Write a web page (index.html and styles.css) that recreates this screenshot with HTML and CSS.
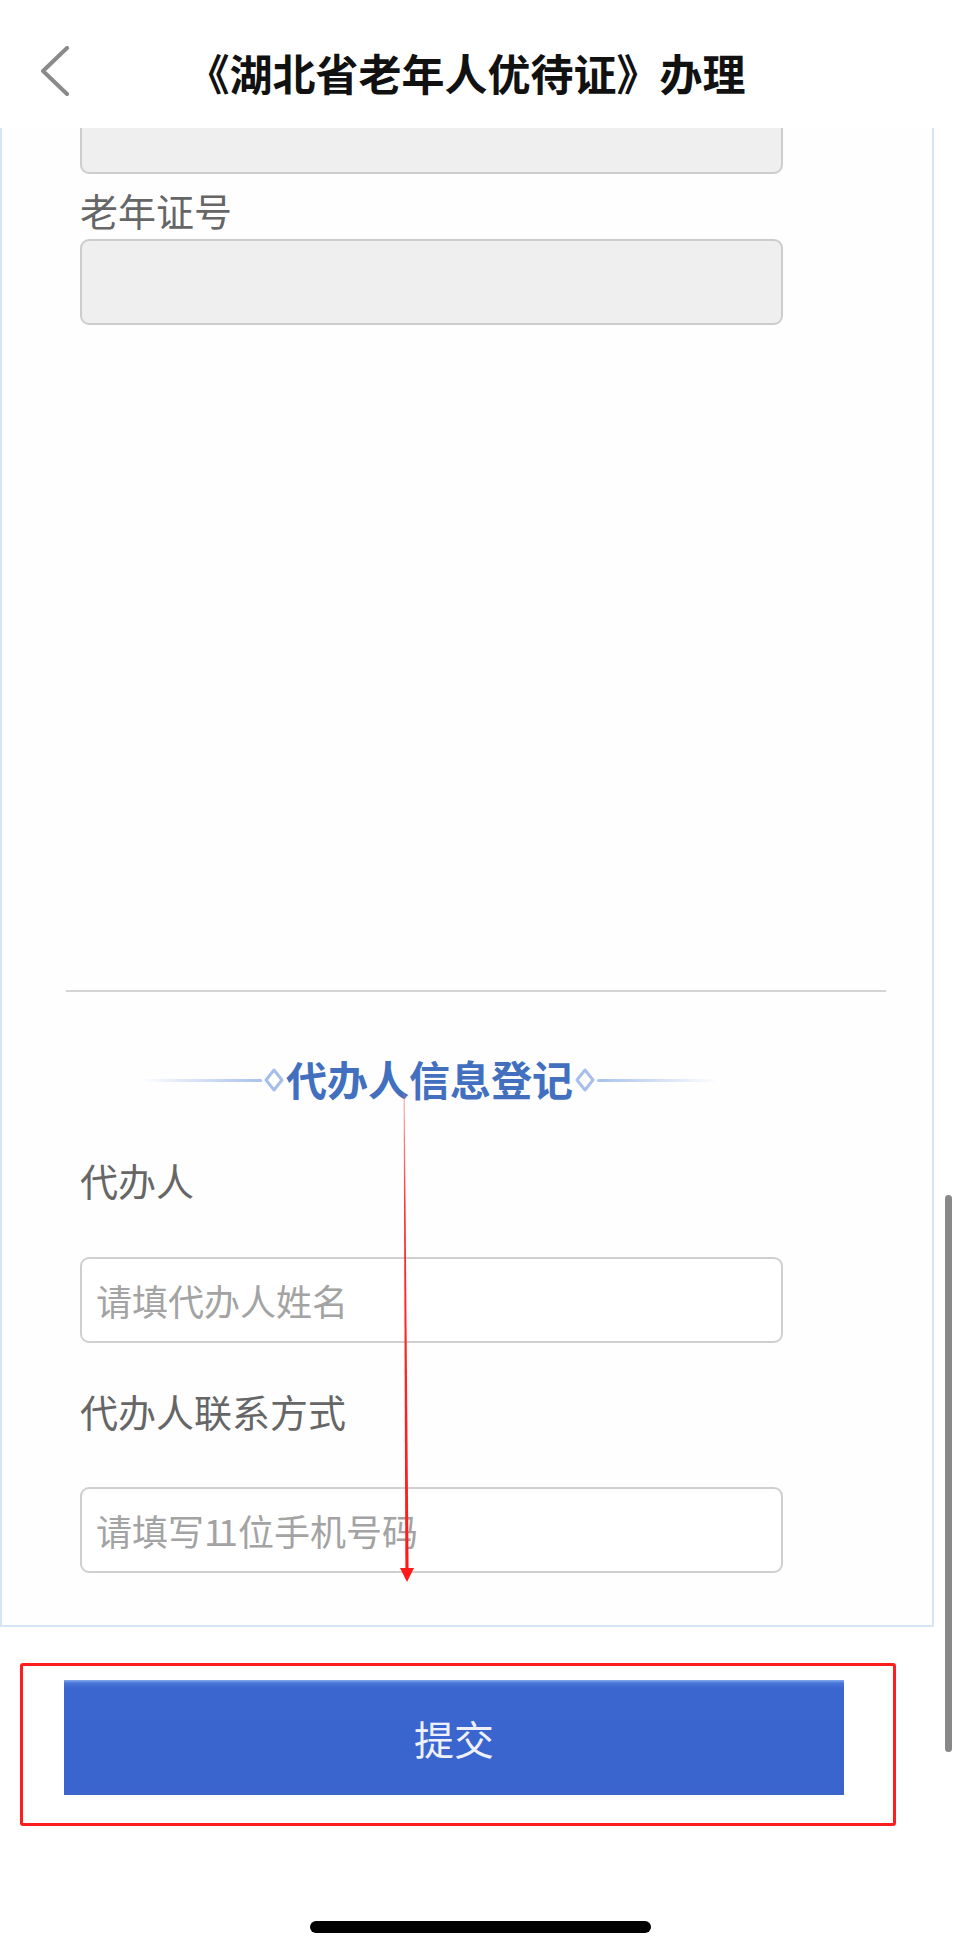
FILE: index.html
```html
<!DOCTYPE html>
<html lang="zh-CN">
<head>
<meta charset="utf-8">
<title>《湖北省老年人优待证》办理</title>
<link rel="stylesheet" href="styles.css">
</head>
<body>
<div class="page">
  <header class="nav">
    <svg class="back" width="30" height="52" viewBox="0 0 30 52" aria-hidden="true">
      <polyline points="27,2 3,25 27,48" fill="none" stroke="#8a8a8a" stroke-width="4" stroke-linecap="round" stroke-linejoin="round"/>
    </svg>
    <h1 class="title">《湖北省老年人优待证》办理</h1>
  </header>

  <main class="card">
    <div class="box grey cut"></div>
    <div class="label first">老年证号</div>
    <div class="box grey"></div>

    <div class="divider"></div>

    <div class="section-title">
      <span class="rule left"></span>
      <svg class="diamond" width="24" height="26" viewBox="0 0 24 26" aria-hidden="true">
        <polygon points="12,3 20,13 12,23 4,13" fill="#ffffff" stroke="#a5bfeb" stroke-width="3" stroke-linejoin="round"/>
      </svg>
      <span class="section-text">代办人信息登记</span>
      <svg class="diamond" width="24" height="26" viewBox="0 0 24 26" aria-hidden="true">
        <polygon points="12,3 20,13 12,23 4,13" fill="#ffffff" stroke="#a5bfeb" stroke-width="3" stroke-linejoin="round"/>
      </svg>
      <span class="rule right"></span>
    </div>

    <div class="label agent">代办人</div>
    <div class="box"><span class="ph">请填代办人姓名</span></div>

    <div class="label contact">代办人联系方式</div>
    <div class="box"><span class="ph">请填写<span class="num">11</span>位手机号码</span></div>
  </main>

  <div class="highlight">
    <button class="submit" type="button">提交</button>
  </div>

  <div class="home-bar"></div>

  <div class="scrollbar"></div>

  <svg class="arrow" width="22" height="500" viewBox="0 0 22 500" aria-hidden="true">
    <defs>
      <linearGradient id="ag" x1="0" y1="0" x2="0" y2="1">
        <stop offset="0" stop-color="#ff6a6a" stop-opacity="0.6"/>
        <stop offset="0.25" stop-color="#ff2a2a"/>
        <stop offset="1" stop-color="#ff1a1a"/>
      </linearGradient>
    </defs>
    <polygon points="7.6,5 8.6,5 12.6,483 9.4,483" fill="url(#ag)"/>
    <polygon points="4,480 18,480 11,494" fill="#ff1a1a"/>
  </svg>
</div>
</body>
</html>
```

FILE: styles.css
```css
* {
  box-sizing: border-box;
}

html, body {
  margin: 0;
  padding: 0;
  background: #ffffff;
}

body {
  font-family: "Noto Sans CJK SC", "Noto Sans", sans-serif;
}

.page {
  position: relative;
  width: 960px;
  height: 1946px;
  overflow: hidden;
  background: #ffffff;
}

/* Header */
.nav {
  height: 128px;
  padding-top: 16px;
  padding-right: 98px;
  display: flex;
  align-items: center;
  background: #ffffff;
}

.back {
  flex: none;
  margin-left: 40px;
  display: block;
}

.title {
  flex: 1;
  margin: 0;
  text-align: center;
  font-size: 43px;
  line-height: 50px;
  font-weight: 700;
  color: #111111;
  letter-spacing: 0;
  white-space: nowrap;
}

/* Card */
.card {
  width: 934px;
  padding: 0 0 52px 78px;
  border-left: 2px solid #d5e5f5;
  border-right: 2px solid #d5e5f5;
  border-bottom: 2px solid #d5e5f5;
  background: #fefeff;
  overflow: hidden;
}

.box {
  width: 703px;
  height: 86px;
  border: 2px solid #cfcfcf;
  border-radius: 9px;
  background: #ffffff;
  display: flex;
  align-items: center;
  padding-left: 14px;
}

.box.grey {
  background: #efefef;
  border-color: #cdcdcd;
}

.box.cut {
  margin-top: -40px;
}

.ph {
  font-size: 36px;
  line-height: 40px;
  color: #a3a3a3;
  white-space: nowrap;
}

.num {
  letter-spacing: -6px;
  margin-right: 6px;
}

.label {
  font-size: 38px;
  line-height: 44px;
  color: #666666;
  white-space: nowrap;
}

.label.first {
  margin-top: 14px;
  margin-bottom: 7px;
}

.label.agent {
  margin-top: 50px;
  margin-bottom: 55px;
}

.label.contact {
  margin-top: 46px;
  margin-bottom: 54px;
}

.divider {
  margin-top: 665px;
  margin-left: -14px;
  width: 820px;
  height: 2px;
  background: #d4d4d4;
}

.section-title {
  margin-top: 56px;
  margin-left: 61px;
  width: 577px;
  height: 60px;
  display: flex;
  align-items: center;
}

.rule {
  flex: 1;
  height: 3px;
  margin-top: 4px;
  border-radius: 2px;
}

.rule.left {
  background: linear-gradient(to right, rgba(168, 193, 236, 0), #a8c1ec);
}

.rule.right {
  background: linear-gradient(to left, rgba(168, 193, 236, 0), #a8c1ec);
}

.diamond {
  flex: none;
  display: block;
  margin-top: 4px;
}

.section-text {
  font-size: 41px;
  line-height: 60px;
  font-weight: 700;
  color: #4270bf;
  white-space: nowrap;
}

/* Submit area */
.highlight {
  margin-top: 36px;
  margin-left: 20px;
  width: 876px;
  border: 3px solid #ff1e1e;
  border-radius: 3px;
  padding: 14px 0 28px 41px;
}

.submit {
  display: flex;
  align-items: center;
  justify-content: center;
  width: 780px;
  height: 115px;
  border: 0;
  border-radius: 0;
  padding: 0;
  background: linear-gradient(to bottom, #86aaee 0, #4a76d8 3px, #3b66d0 8px, #3a64cc 100%);
  font-family: "Noto Sans CJK SC", "Noto Sans", sans-serif;
  font-size: 40px;
  line-height: 48px;
  color: #eef1fb;
}

.home-bar {
  margin-top: 95px;
  margin-left: 310px;
  width: 341px;
  height: 12px;
  border-radius: 6px;
  background: #000000;
}

/* Overlays */
.scrollbar {
  position: absolute;
  left: 945px;
  top: 1195px;
  width: 7px;
  height: 557px;
  border-radius: 4px;
  background: #888888;
}

.arrow {
  position: absolute;
  left: 396px;
  top: 1088px;
}
```
